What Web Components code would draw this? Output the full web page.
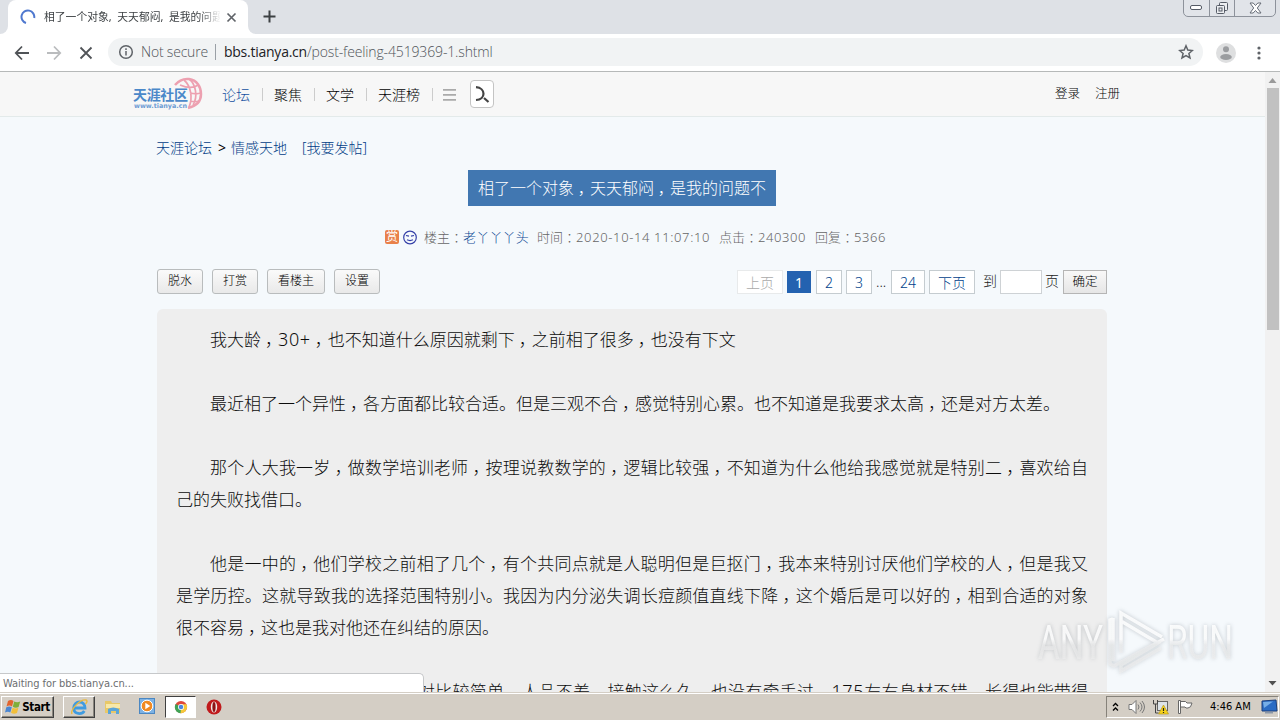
<!DOCTYPE html>
<html lang="zh-CN">
<head>
<meta charset="utf-8">
<title>相了一个对象</title>
<style>
body {
  margin: 0;
  width: 1280px;
  height: 720px;
  overflow: hidden;
  display: flex;
  flex-direction: column;
  font-family: "Noto Sans", "Noto Sans CJK SC", sans-serif;
  color: #333;
}
</style>
</head>
<body>
<tab-strip></tab-strip>
<browser-toolbar></browser-toolbar>
<page-view>
  <site-header></site-header>
  <bread-crumb></bread-crumb>
  <post-title>相了一个对象，天天郁闷，是我的问题不</post-title>
  <post-meta></post-meta>
  <post-actions></post-actions>
  <post-body></post-body>
</page-view>
<task-bar></task-bar>

<script>
// Attach an open shadow root and fill it
function render(el, html) {
  el.attachShadow({mode: 'open'}).innerHTML = html;
}

// Full-width punctuation sits in the middle of its cell
const punctStyle = '.p { padding-left: .24em; letter-spacing: -.24em; }';

function punct(text) {
  return text.replace(/[，：]/g, '<span class="p">$&</span>');
}

class TabStrip extends HTMLElement {
  constructor() {
    super();
    render(this, `
<style>
:host { display: flex; height: 34px; background: #dee1e6; flex: none; }
.foot { width: 8px; background: #fff; }
.foot i { display: block; height: 34px; background: #dee1e6; }
.foot.l i { border-bottom-right-radius: 8px; }
.foot.r i { border-bottom-left-radius: 8px; }
.tab { box-sizing: border-box; width: 240px; background: #fff; border-radius: 8px 8px 0 0; display: flex; align-items: center; padding: 0 9px 0 12px; }
.title { width: 176px; margin-left: 8px; font-size: 10.8px; line-height: 18px; white-space: nowrap; overflow: hidden; color: #3c4043;
  -webkit-mask-image: linear-gradient(90deg, #000 155px, transparent 177px); }
.close { margin-left: 6px; }
.plus { margin: 10px 0 0 7px; }
.win { box-sizing: border-box; margin: -2px 4px 0 auto; height: 19px; width: 93px; border: 1px solid #8d929b; border-radius: 0 0 5px 5px; display: flex; background: #e1e4e9; }
.win span { display: flex; align-items: center; justify-content: center; border-right: 1px solid #8d929b; }
.win span:last-child { border: 0; }
</style>
<div class="foot l"><i></i></div>
<div class="tab">
  <svg width="16" height="16" viewBox="0 0 16 16" fill="none" stroke="#4f78cf" stroke-width="2"><path d="M6 14A6.400 6.400 0 1 1 14.200 9"/></svg>
  <div class="title">相了一个对象,&nbsp;&nbsp;天天郁闷,&nbsp;&nbsp;是我的问题</div>
  <svg class="close" width="11" height="11" viewBox="0 0 11 11" stroke="#5f6368" stroke-width="1.700"><path d="M1.500 1.500l8 8M9.500 1.500l-8 8"/></svg>
</div>
<div class="foot r"><i></i></div>
<svg class="plus" width="13" height="13" viewBox="0 0 13 13" stroke="#3c4043" stroke-width="2"><path d="M6.500 .5v12M.5 6.500h12"/></svg>
<div class="win">
  <span style="width:25px"><svg width="13" height="5"><rect x=".5" y=".5" width="11" height="4" rx="1.500" fill="#fff" stroke="#555b66"/></svg></span>
  <span style="width:24px"><svg width="14" height="14" fill="#eceef1" stroke="#555b66"><rect x="4.500" y="1.500" width="8" height="8" rx="1"/><rect x="1.500" y="4.500" width="8" height="8" rx="1"/><rect x="4" y="7" width="3" height="3"/></svg></span>
  <span style="flex:1"><svg width="13" height="12" viewBox="0 0 13 12"><path d="M1 1h3.200l2.300 2.500L8.800 1H12L8.300 6l3.700 5H8.800L6.500 8.500 4.200 11H1l3.700-5z" fill="#fff" stroke="#666c76"/></svg></span>
</div>`);
  }
}

class BrowserToolbar extends HTMLElement {
  constructor() {
    super();
    render(this, `
<style>
:host { box-sizing: border-box; height: 38px; flex: none; display: flex; align-items: center; background: #fff; border-bottom: 1px solid #b6b9b9; padding-left: 14px; }
svg { flex: none; }
.omni { box-sizing: border-box; margin: -1px 0 0 15px; width: 1095px; height: 28px; border-radius: 14px; background: #f1f3f4; display: flex; align-items: center; padding: 0 9px 0 10px; font: 300 14px/20px "Open Sans", "Noto Sans", sans-serif; color: #50545a; white-space: pre; }
.omni .sec { margin-left: 7px; letter-spacing: -.2px; }
.omni i { width: 1px; height: 16px; background: #9aa0a6; margin: 0 8px 0 7px; }
.omni b { font-weight: 400; color: #202124; letter-spacing: -.24px; }
.omni .url { letter-spacing: -.14px; }
.star { margin-left: auto; }
.user { margin-left: 13px; }
.more { margin-left: 21px; }
</style>
<svg width="16" height="16" viewBox="0 0 16 16" fill="none" stroke="#505357" stroke-width="1.800"><path d="M15 8H2M8 1.500L1.800 8 8 14.500"/></svg>
<svg style="margin-left:16px" width="16" height="16" viewBox="0 0 16 16" fill="none" stroke="#babcbe" stroke-width="1.800"><path d="M1 8h13M8 1.500L14.200 8 8 14.500"/></svg>
<svg style="margin-left:17px" width="14" height="14" viewBox="0 0 14 14" stroke="#505357" stroke-width="1.800"><path d="M1.500 1.500l11 11M12.500 1.500l-11 11"/></svg>
<div class="omni">
  <svg width="16" height="16" viewBox="0 0 16 16" fill="none" stroke="#5f6368" stroke-width="1.500"><circle cx="8" cy="8" r="6.300"/><path d="M8 7v4.500M8 4.300v1.600"/></svg><span class="sec">Not secure</span><i></i><b>bbs.tianya.cn</b><span class="url">/post-feeling-4519369-1.shtml</span>
  <svg class="star" width="16" height="16" viewBox="0 0 16 16" fill="none" stroke="#5f6368" stroke-width="1.500"><path d="M8 1.800l1.800 4.300 4.600.4-3.500 3 1.100 4.500L8 11.600 4 14l1.100-4.500-3.500-3 4.600-.4z"/></svg>
</div>
<svg class="user" width="20" height="20" viewBox="0 0 20 20"><circle cx="10" cy="10" r="10" fill="#dedfe0"/><circle cx="10" cy="6.300" r="3" fill="#9b9da0"/><ellipse cx="10" cy="14" rx="5.800" ry="3" fill="#9b9da0"/></svg>
<svg class="more" width="4" height="14" viewBox="0 0 4 14" fill="#5f6368"><circle cx="2" cy="2" r="1.600"/><circle cx="2" cy="7" r="1.600"/><circle cx="2" cy="12" r="1.600"/></svg>`);
  }
}

class PageView extends HTMLElement {
  constructor() {
    super();
    render(this, `
<style>
:host { height: 620px; flex: none; display: flex; position: relative; overflow: hidden; background: #f5f9fc; }
.page { width: 1265px; flex: none; overflow: hidden; }
.bar { flex: 1; background: #f1f1f1; display: flex; flex-direction: column; align-items: center; }
.thumb { width: 12px; height: 242px; background: #c1c1c1; }
.bar svg { flex: none; }
.status { position: absolute; left: -1px; bottom: 0; box-sizing: border-box; width: 425px; height: 19px; background: #fff; border: 1px solid #c6c8ca; border-bottom: 0; border-radius: 0 5px 0 0; font: 11px/19px "DejaVu Sans Condensed", "DejaVu Sans", sans-serif; color: #6c6e70; padding-left: 3px; letter-spacing: -.08px; }
.mark { position: absolute; left: 1030px; top: 529px; filter: drop-shadow(0 0 2px rgba(90, 100, 110, .4)); }
</style>
<div class="page"><slot></slot></div>
<div class="bar">
  <svg width="15" height="16"><path d="M3.500 11l4-5 4 5z" fill="#9a9a9a"/></svg>
  <div class="thumb"></div>
  <svg style="margin-top:auto" width="15" height="16"><path d="M3.500 5l4 4.500 4-4.500z" fill="#505050"/></svg>
</div>
<svg class="mark" width="210" height="80" viewBox="0 0 210 80">
  <linearGradient id="fade" gradientUnits="userSpaceOnUse" x1="0" y1="38" x2="0" y2="44">
    <stop offset="0" stop-color="#fff" stop-opacity=".85"/><stop offset="1" stop-color="#eee" stop-opacity=".65"/>
  </linearGradient>
  <g fill="url(#fade)" font-family="Roboto" font-weight="400" font-size="49">
    <text x="8" y="58" textLength="65" lengthAdjust="spacingAndGlyphs">ANY</text>
    <text x="137" y="58" textLength="66" lengthAdjust="spacingAndGlyphs">RUN</text>
  </g>
  <path d="M83 60V17M83 18l-3 1v44l4 2 50-27M91 52V12l41 24M91 20l37 22-37 22v6l40-23" fill="none" stroke="url(#fade)" stroke-width="3.500"/>
</svg>
<div class="status">Waiting for bbs.tianya.cn...</div>`);
  }
}

class SiteHeader extends HTMLElement {
  constructor() {
    super();
    render(this, `
<style>
:host { box-sizing: border-box; height: 45px; display: flex; align-items: center; background: #f7f7f7; border-bottom: 1px solid #e3eaea; padding: 0 145px 0 132px; font-size: 14px; line-height: 20px; font-weight: 300; color: #000; }
nav { display: flex; align-items: center; margin-left: 18px; padding-top: 1px; }
nav i { width: 1px; height: 13px; background: #ccc; margin: 0 11px 0 12px; }
nav .on { color: #1450a0; }
.search { box-sizing: border-box; width: 24px; height: 28px; margin-left: 14px; border: 1px solid #c4c4c4; border-radius: 4px; background: #fff; }
.user { margin-left: auto; font-size: 12.500px; display: flex; gap: 15px; }
</style>
<svg width="72" height="34" viewBox="0 0 72 34">
  <g fill="none" stroke="#eda0b0" stroke-width="1.700">
    <path d="M43 8C47 3 52 1.500 57 2c8 1 12 8 12 15S65 29 56 31" stroke-width="2.500"/>
    <path d="M48 8c7 3 14 3 18 0M58 16c4 1 8 1 11 0M58 24c4 1 6 1 9 0M52 3c7 6 9 18 5 27M57 2c7 5 9 18 4 26"/>
  </g>
  <text x="1" y="23" font-family="Noto Sans CJK SC" font-weight="700" font-size="14" fill="#4b88c9" textLength="55">天涯社区</text>
  <text x="2" y="31" font-family="DejaVu Sans" font-weight="700" font-size="6.500" fill="#6d9bd3" textLength="53" lengthAdjust="spacingAndGlyphs">www.tianya.cn</text>
</svg>
<nav><span class="on">论坛</span><i></i><span>聚焦</span><i></i><span>文学</span><i></i><span>天涯榜</span><i></i>
<svg style="margin-left:-1px" width="13" height="12" fill="#aaa"><path d="M0 0h13v1.800H0zM0 5h13v1.800H0zM0 10h13v1.800H0z"/></svg></nav>
<div class="search"><svg width="22" height="26" viewBox="0 0 22 26" fill="none" stroke="#444" stroke-width="2.200"><path d="M5 6.200C15 7 15 18.500 5 19M13 17l4.500 4"/></svg></div>
<div class="user"><span>登录</span><span>注册</span></div>`);
  }
}

class BreadCrumb extends HTMLElement {
  constructor() {
    super();
    render(this, `
<style>
:host { display: flex; height: 20px; padding: 21px 0 0 156px; font-size: 14px; line-height: 20px; font-weight: 300; color: #003c86; }
b { font-weight: 400; color: #000; margin: 0 5px 0 6px; }
span:last-child { margin-left: 15px; }
</style>
<span>天涯论坛</span><b>&gt;</b><span>情感天地</span><span>[我要发帖]</span>`);
  }
}

class PostTitle extends HTMLElement {
  constructor() {
    super();
    render(this, `
<style>
${punctStyle}
:host { display: flex; height: 36px; padding: 12px 0 0 468px; }
h1 { margin: 0; padding: 0 10px; background: #4177b1; color: #fff; font-weight: 300; font-size: 16px; line-height: 36px; }
</style>
<h1>${punct(this.textContent)}</h1>`);
  }
}

class PostMeta extends HTMLElement {
  constructor() {
    super();
    render(this, `
<style>
${punctStyle}
:host { display: flex; align-items: center; height: 20px; padding: 21px 0 0 385px; font-size: 13px; line-height: 20px; color: #666; font-weight: 300; white-space: nowrap; }
.tip { width: 14px; height: 14px; border-radius: 2px; background: #e9814a; color: #fff; font-size: 12px; font-weight: 400; line-height: 14px; text-align: center; margin-right: 4px; }
.name { color: #0c4a94; letter-spacing: .2px; margin-right: 8px; }
.num { letter-spacing: .63px; margin-right: 9px; }
.cnt { letter-spacing: .58px; }
</style>
<span class="tip">赏</span>
<svg style="margin-right:6px" width="15" height="15" viewBox="0 0 15 15" fill="none" stroke="#3540a8" stroke-width="1.200"><circle cx="7" cy="7.500" r="6.300"/><path d="M3 5.500l3 .7M11 5.500l-3 .7M4 9.800q3 1.500 6 0"/></svg>
<span>${punct('楼主：')}</span><span class="name">老丫丫丫头</span>
<span>${punct('时间：')}</span><span class="num">2020-10-14 11:07:10</span>
<span>${punct('点击：')}</span><span class="num cnt">240300</span>
<span>${punct('回复：')}</span><span class="num cnt">5366</span>`);
  }
}

class PostActions extends HTMLElement {
  constructor() {
    super();
    render(this, `
<style>
:host { display: flex; align-items: flex-start; padding: 21px 158px 0 157px; height: 41px; font-weight: 300; }
.btn { box-sizing: border-box; height: 25px; margin-top: 1px; border: 1px solid #b9bcbd; border-radius: 3px; background: linear-gradient(#fafafa, #e9e9e9); font-size: 12px; line-height: 22px; padding: 0 10px; margin-right: 9px; color: #000; }
.pages { margin: 2px 0 0 auto; display: flex; align-items: center; font-size: 14px; line-height: 22px; color: #003f8c; }
.pages a { box-sizing: border-box; height: 24px; border: 1px solid #c5ccd0; background: #fff; text-align: center; margin-right: 4px; line-height: 23px; }
.pages .off { color: #aaa; border-color: #e8eaeb; width: 46px; }
.pages .cur { background: #2462b0; border-color: #2462b0; height: 22px; line-height: 21px; width: 24px; color: #fff; margin-right: 5px; font-weight: 400; }
.txt { color: #222; }
.up { padding-bottom: 2px; }
.in { box-sizing: border-box; width: 42px; height: 24px; border: 1px solid #ced2d5; background: #fff; margin: 0 3px; }
.ok { box-sizing: border-box; width: 44px; height: 24px; border: 1px solid #b5b5b5; background: linear-gradient(#f8f8f8, #e6e6e6); color: #000; font-size: 12.500px; text-align: center; margin-left: 4px; }
</style>
<span class="btn">脱水</span><span class="btn">打赏</span><span class="btn">看楼主</span><span class="btn">设置</span>
<div class="pages">
  <a class="off">上页</a><a class="cur">1</a><a style="width:26px">2</a><a style="width:26px">3</a><span class="txt" style="width:15px">...</span><a style="width:34px">24</a><a style="width:46px">下页</a>
  <span class="txt up" style="margin-left:4px">到</span><span class="in"></span><span class="txt up">页</span><span class="ok">确定</span>
</div>`);
  }
}

// One entry per line; '' is the empty line between paragraphs
const lines = [
  ['in', '我大龄，30+，也不知道什么原因就剩下，之前相了很多，也没有下文'],
  ['', ''],
  ['in', '最近相了一个异性，各方面都比较合适。但是三观不合，感觉特别心累。也不知道是我要求太高，还是对方太差。'],
  ['', ''],
  ['in full', '那个人大我一岁，做数学培训老师，按理说教数学的，逻辑比较强，不知道为什么他给我感觉就是特别二，喜欢给自'],
  ['', '己的失败找借口。'],
  ['', ''],
  ['in full', '他是一中的，他们学校之前相了几个，有个共同点就是人聪明但是巨抠门，我本来特别讨厌他们学校的人，但是我又'],
  ['full', '是学历控。这就导致我的选择范围特别小。我因为内分泌失调长痘颜值直线下降，这个婚后是可以好的，相到合适的对象'],
  ['', '很不容易，这也是我对他还在纠结的原因。'],
  ['', ''],
  ['cut full', '对比较简单，人品不差，接触这么久，也没有牵手过，175左右身材不错，长得也能带得']
];

class PostBody extends HTMLElement {
  constructor() {
    super();
    render(this, `
<style>
${punctStyle}
:host { box-sizing: border-box; display: block; width: 950px; height: 500px; margin: 0 0 0 157px; padding: 15px 19px 0; background: #eee; border-radius: 6px; font-size: 17px; line-height: 32px; font-weight: 300; color: #0c0c0c; }
div { height: 32px; white-space: nowrap; }
.n { font-size: 18px; line-height: 1; letter-spacing: .6px; }
.in { padding-left: 34px; }
.cut { padding-left: 242px; }
.full { text-align: justify; text-align-last: justify; white-space: normal; }
</style>
${lines.map(([cls, text]) => `<div class="${cls}">${punct(text).replace(/\d+\+?/, '<span class="n">$&</span>')}</div>`).join('\n')}`);
  }
}

class TaskBar extends HTMLElement {
  constructor() {
    super();
    render(this, `
<style>
:host { box-sizing: border-box; height: 28px; flex: none; display: flex; align-items: center; background: #d4cec5; border-top: 1px solid #d4cec5; box-shadow: inset 0 1px #fff; font: 11px/18px "DejaVu Sans Condensed", sans-serif; color: #000; padding: 2px 1px 2px 1px; }
.b { box-sizing: border-box; height: 22px; display: flex; align-items: center; justify-content: center; border: 1px solid; border-color: #fff #404040 #404040 #fff; box-shadow: inset -1px -1px #8a867e; }
.start { width: 53px; font-weight: 700; font-size: 11.500px; gap: 1px; letter-spacing: -.4px; }
.down { border-color: #404040 #fff #fff #404040; box-shadow: none; background: #fff; }
.tray { box-sizing: border-box; margin-left: auto; width: 173px; height: 22px; border: 1px solid; border-color: #86827a #fff #fff #86827a; display: flex; align-items: center; padding-left: 5px; }
svg { flex: none; }
</style>
<div class="b start">
  <svg width="16" height="16" viewBox="0 0 16 16"><path d="M3 2q3-2 5.500 0L7 7.500q-2.500-1.800-5.500 0z" fill="#e2642e"/><path d="M9.200 2.500q3 1.500 6 0L13.600 8q-3 1.500-5.800-.2z" fill="#7fae3a"/><path d="M1.300 8.300q3-1.800 5.500 0L5.300 13.600q-2.500-1.600-5.300 0z" fill="#4a86d2"/><path d="M7.600 8.800q3 1.500 5.800 0L12 14q-3 1.700-6-.2z" fill="#f2bf3a"/></svg>Start
</div>
<div class="b" style="width:32px;margin-left:9px">
  <svg width="18" height="18" viewBox="0 0 18 18" fill="none"><path d="M4 10h11c0-8-11-8-11.300 0 .3 7 8.300 6.600 10.600 3" stroke="#3f9be0" stroke-width="2.800"/><path d="M2 16C0 12 10 1 16 2c2 1 .5 3-.5 4" stroke="#e9b93f" stroke-width="1.400"/></svg>
</div>
<svg style="margin-left:9px" width="18" height="18" viewBox="0 0 18 18"><path d="M1 3h6l1 2h8v10H1z" fill="#e8c868"/><path d="M2 6h14v4H2z" fill="#f8e8a8"/><path d="M4 16v-5q5-3 11 0v5h-3v-3H7v3z" fill="#5ba5d8"/></svg>
<svg style="margin-left:17px" width="17" height="17" viewBox="0 0 17 17"><rect x=".5" y=".5" width="15" height="15" fill="#7db2e4" stroke="#4b87c2"/><circle cx="8" cy="8" r="5.800" fill="#f08a22" stroke="#fff"/><path d="M6.300 4.800v6.400L11.300 8z" fill="#fff"/></svg>
<div class="b down" style="width:31px;margin-left:9px">
  <svg width="14" height="14" viewBox="0 0 16 16"><circle cx="8" cy="8" r="7" fill="#e0483a"/><path d="M8 8L1.900 4.500A7 7 0 0 0 7.500 15l3.200-5.400z" fill="#3fa355"/><path d="M8 8h7a7 7 0 0 1-7.500 7z" fill="#f5c83a"/><path d="M8 4.800h6.200A7 7 0 0 1 15 8l-4.200 1z" fill="#f5c83a"/><circle cx="8" cy="8" r="3.400" fill="#fff"/><circle cx="8" cy="8" r="2.600" fill="#4a86e0"/></svg>
</div>
<svg style="margin-left:10px" width="16" height="16" viewBox="0 0 16 16"><circle cx="8" cy="8" r="7.500" fill="#c01a1c"/><ellipse cx="8" cy="8" rx="3.200" ry="5.500" fill="#f0e8e6"/><ellipse cx="8" cy="8" rx="1.600" ry="5" fill="#8c1214"/></svg>
<div class="tray">
  <svg width="7" height="10" fill="none" stroke="#000" stroke-width="1.300"><path d="M1 4l2.500-2.500L6 4M1 8.500L3.500 6 6 8.500"/></svg>
  <svg style="margin-left:9px" width="17" height="16" viewBox="0 0 17 16" fill="none" stroke="#777"><path d="M1 5.500h3l4-4v13l-4-4H1z" fill="#fff"/><path d="M10 5.500q2 2.500 0 5M12 3.500q4 4.500 0 9M14 2q5 6 0 12" /></svg>
  <svg style="margin-left:7px" width="17" height="16" viewBox="0 0 17 16"><rect x="5.500" y="2.500" width="10" height="9" fill="#dde3e8" stroke="#666"/><path d="M1.500 1v4h4V1M3.500 5v9h3" fill="none" stroke="#444"/><path d="M11.500 6l5 9h-10z" fill="#f6d21c" stroke="#b09010" stroke-width=".6"/><path d="M11.500 9v3M11.500 13v1" stroke="#222" stroke-width="1.200"/></svg>
  <svg style="margin-left:7px" width="17" height="16" viewBox="0 0 17 16" fill="#fff" stroke="#666"><path d="M2.500 1.500h2v13h-2zM4.500 2.500h5l1.500 1.500h5q-1 5-4 5h-2L9 8H4.500z"/></svg>
  <span style="margin-left:17px">4:46 AM</span>
  <svg style="margin-left:10px" width="17" height="15" viewBox="0 0 17 15"><path d="M1 2l14-1 1 11H1z" fill="#2b6cc4" stroke="#1c3f7c"/><path d="M2 3l10-.5L3 9z" fill="#76aee8"/><path d="M4 13h8v1.500H4z" fill="#8c98a8"/></svg>
</div>`);
  }
}

customElements.define('tab-strip', TabStrip);
customElements.define('browser-toolbar', BrowserToolbar);
customElements.define('page-view', PageView);
customElements.define('site-header', SiteHeader);
customElements.define('bread-crumb', BreadCrumb);
customElements.define('post-title', PostTitle);
customElements.define('post-meta', PostMeta);
customElements.define('post-actions', PostActions);
customElements.define('post-body', PostBody);
customElements.define('task-bar', TaskBar);
</script>
</body>
</html>
